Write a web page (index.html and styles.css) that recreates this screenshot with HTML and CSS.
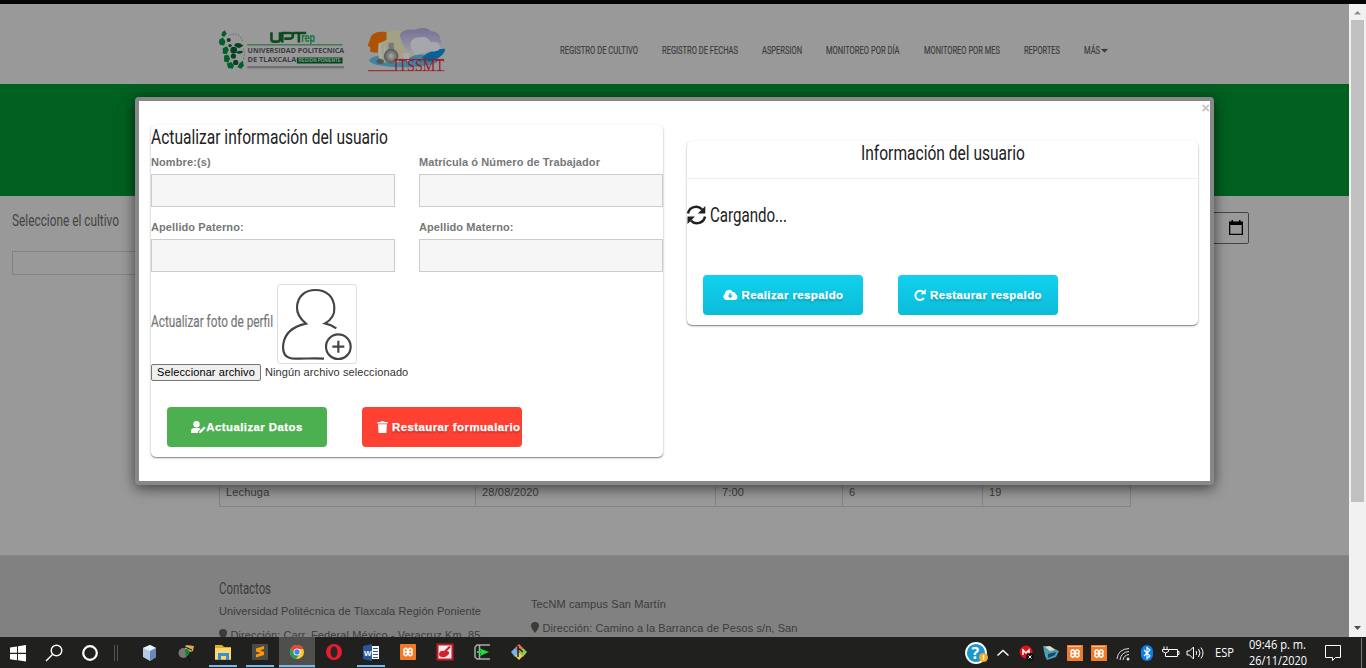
FILE: index.html
```
<!DOCTYPE html>
<html lang="es">
<head>
<meta charset="utf-8">
<title>Actualizar información del usuario</title>
<link rel="stylesheet" href="styles.css">
</head>
<body>
<div class="strip"></div>
<div class="browser">
  <div class="page">
    <header class="header">
      <svg class="logo-upt" viewBox="0 0 390 130" width="130" height="43">
        <g fill="#00602a">
          <path d="M14 10l8-6 6 10-8 10-8-4zM6 32l10-6 8 12-4 12-12-2-4-8z"/>
          <path d="M16 58l12-6 6 10-6 14-12-2zM20 80l12-2 6 12-6 12-12-4zM28 104l14-4 8 10-4 10-14-2zM66 104l10-8 4 14-8 10-12-4z"/>
        </g>
        <g fill="#073f22"><circle cx="34" cy="33" r="6"/><circle cx="49" cy="64" r="10"/><circle cx="48" cy="82" r="8"/><circle cx="55" cy="101" r="8"/><circle cx="38" cy="50" r="5"/><path d="M50 48q10-12 28 2q-15 16-28-2zM56 72q8-10 22-4q-8 12-22 4z"/></g>
        <g fill="none" stroke="#34644b" stroke-width="2" stroke-dasharray="5 4"><path d="M36 18q32-10 40 20M78 60q6 16 0 34"/></g>
        <path d="M163 10v20q0 8 8 8h10q8 0 8-8V10M196 41V12h24q8 0 8 8t-8 9h-18M228 12h40M246 12v29" fill="none" stroke="#0d4b20" stroke-width="8"/>
        <text x="253" y="39" class="logo-rep" textLength="42" lengthAdjust="spacingAndGlyphs">rep</text>
        <path d="M90 48h288" stroke="#156c32" stroke-width="3"/>
        <text x="91" y="73" class="logo-word" textLength="292" lengthAdjust="spacingAndGlyphs">UNIVERSIDAD POLITECNICA</text>
        <text x="91" y="101" class="logo-word" textLength="147" lengthAdjust="spacingAndGlyphs">DE TLAXCALA</text>
        <path fill="#07461d" d="M240 86h138v18H240z"/>
        <text x="245" y="101" class="logo-small" textLength="128" lengthAdjust="spacingAndGlyphs">REGION PONIENTE</text>
        <path d="M90 115h292" stroke="#6e6e76" stroke-width="6"/><path d="M90 120h292" stroke="#888" stroke-width="3"/>
      </svg>
      <svg class="logo-its" viewBox="0 0 240 142" width="80" height="47">
        <defs><radialGradient id="flask"><stop offset="0" stop-color="#aaa"/><stop offset="1" stop-color="#555"/></radialGradient>
        <linearGradient id="cloud" x2="0" y2="1"><stop stop-color="#747194"/><stop offset="1" stop-color="#9d9ca8"/></linearGradient></defs>
        <ellipse cx="110" cy="104" rx="104" ry="21" fill="#3e83a1"/>
        <path d="M165 95q30-27 70-26q0 24-50 40z" fill="#08629a"/>
        <path d="M60 22q30-20 68 8l22 55-55 25H38V46z" fill="#a3a286"/>
        <path d="M98 26q10-18 44-15q34-12 51 5q28 2 27 23q14 18-16 28l-84 14q-19-34-22-55z" fill="url(#cloud)"/>
        <path d="M130 54q5-23 30-20q21-5 32 15q26-3 27 13q2 18-28 14l-45 12q-15-15-16-34z" fill="#a6a6ad"/>
        <path d="M58 18q-47-6-50 25l-7 17 9 5-2 12q12 4 23 4l4-29 23-10z" fill="#af5102"/>
        <path d="M34 52h9v44H34zM50 62h5v25h-5zM109 82h18v24h-18z" fill="#aaa"/>
        <path d="M64 51h16v31H64z" fill="#777"/><circle cx="72" cy="91" r="22" fill="url(#flask)"/><ellipse cx="39" cy="107" rx="11" ry="7" fill="#555"/>
        <text x="80" y="135" class="logo-itssmt" textLength="152" lengthAdjust="spacingAndGlyphs">ITSSMT</text>
        <path d="M2 135h80M82 101h150" stroke="#991c28" stroke-width="3"/><path d="M82 135h152" stroke="#991c28" stroke-width="2"/>
      </svg>
      <nav class="nav">
        <svg width="78" height="14"><text y="11" textLength="78" lengthAdjust="spacingAndGlyphs">REGISTRO DE CULTIVO</text></svg>
        <svg width="76" height="14"><text y="11" textLength="76" lengthAdjust="spacingAndGlyphs">REGISTRO DE FECHAS</text></svg>
        <svg width="40" height="14"><text y="11" textLength="40" lengthAdjust="spacingAndGlyphs">ASPERSION</text></svg>
        <svg width="74" height="14"><text y="11" textLength="73.500" lengthAdjust="spacingAndGlyphs">MONITOREO POR DÍA</text></svg>
        <svg width="76" height="14"><text y="11" textLength="76" lengthAdjust="spacingAndGlyphs">MONITOREO POR MES</text></svg>
        <svg width="36" height="14"><text y="11" textLength="36" lengthAdjust="spacingAndGlyphs">REPORTES</text></svg>
        <svg width="24" height="14"><text y="11" textLength="16" lengthAdjust="spacingAndGlyphs">MÁS</text><path d="M17 6h7l-3.500 3.500z"/></svg>
      </nav>
    </header>
    <div class="hero"></div>
    <main class="content">
      <div class="filters">
        <div class="crop">
          <svg width="108" height="22"><text y="16" textLength="107" lengthAdjust="spacingAndGlyphs">Seleccione el cultivo</text></svg>
          <div class="crop-input"></div>
        </div>
        <div class="date-input">
          <svg width="14" height="16" viewBox="0 0 14 16"><path d="M2.500 0h1.500v1.500h6V0h1.500v1.500H14V15H0V1.500h2.500zM1.300 5v8.700h11.400V5z" fill="#000" fill-rule="evenodd"/></svg>
        </div>
      </div>
      <div class="row">
        <span>Lechuga</span><span>28/08/2020</span><span>7:00</span><span>6</span><span>19</span>
      </div>
    </main>
    <footer class="footer">
      <div class="contact">
        <svg width="54" height="18"><text y="15" class="foot-title" textLength="52" lengthAdjust="spacingAndGlyphs">Contactos</text></svg>
        <p><svg width="264" height="14"><text y="11" textLength="262" lengthAdjust="spacing">Universidad Politécnica de Tlaxcala Región Poniente</text></svg></p>
        <p class="address"><svg width="264" height="16"><path d="M4 1a4 4 0 0 1 4 4q0 2-4 7q-4-5-4-7a4 4 0 0 1 4-4z"/><text x="11.500" y="11" textLength="250" lengthAdjust="spacing">Dirección: Carr. Federal México - Veracruz Km. 85</text></svg></p>
      </div>
      <div class="contact second">
        <p><svg width="264" height="14"><text y="11" textLength="135" lengthAdjust="spacing">TecNM campus San Martín</text></svg></p>
        <p class="address"><svg width="270" height="16"><path d="M4 1a4 4 0 0 1 4 4q0 2-4 7q-4-5-4-7a4 4 0 0 1 4-4z"/><text x="11.500" y="11" textLength="255" lengthAdjust="spacing">Dirección: Camino a la Barranca de Pesos s/n, San</text></svg></p>
      </div>
    </footer>
  </div>
  <div class="scrollbar">
    <svg width="17" height="16"><path d="M5 10.500h7L8.500 7z" fill="#8a8a8a"/></svg>
    <div class="thumb"></div>
    <svg class="down" width="17" height="17"><path d="M5 6h7l-3.500 4z" fill="#505050"/></svg>
  </div>
</div>

<div class="modal">
  <span class="close">×</span>
  <section class="card form">
    <svg class="title" width="240" height="28"><text y="19" textLength="237" lengthAdjust="spacingAndGlyphs">Actualizar información del usuario</text></svg>
    <div class="fields">
      <label>Nombre:(s)<input></label>
      <label>Matrícula ó Número de Trabajador<input></label>
      <label>Apellido Paterno:<input></label>
      <label>Apellido Materno:<input></label>
    </div>
    <div class="photo">
      <svg width="122" height="24"><text y="18" textLength="122" lengthAdjust="spacingAndGlyphs">Actualizar foto de perfil</text></svg>
      <div class="avatar">
        <svg viewBox="0 0 240 240" width="80" height="80" fill="none" stroke="#444" stroke-width="6.500"><path d="M141 224C105 221 72 226 44 223C22 220 16 202 19 179Q27 132 87 119C68 103 59 89 60 69C62 36 85 18 115 18C150 18 172 40 172 73C173 94 162 108 144 118Q162 122 178 133"/><circle cx="184" cy="188" r="37"/><path d="M184 170v36M166 188h36"/></svg>
      </div>
    </div>
    <div class="file"><span class="file-btn">Seleccionar archivo</span><span class="file-name">Ningún archivo seleccionado</span></div>
    <div class="actions">
      <button class="btn green"><svg width="15" height="13" viewBox="0 0 15 13"><circle cx="5.500" cy="3.200" r="3.200"/><path d="M0 12v-2q0-3 3.500-3h4.500l1.500 1L7 10.500V12zM8 12l.5-2L13 5.500l1.700 1.600L10 11.800z"/></svg>Actualizar Datos</button>
      <button class="btn red"><svg width="11" height="13" viewBox="0 0 11 13"><path d="M.3 1h3l.7-.8h3l.7.8h3v1.500H.3zM1 3.300h9L9.400 12h-7.800z"/></svg><span>Restaurar formualario</span></button>
    </div>
  </section>
  <section class="card info">
    <div class="info-head"><svg class="title" width="164" height="26"><text y="19" textLength="164" lengthAdjust="spacingAndGlyphs">Información del usuario</text></svg></div>
    <div class="loading">
      <svg width="19" height="20" viewBox="0 0 19 20"><path d="M1 8.500a8.200 8.200 0 0 1 14-4.200M18 11.500a8.200 8.200 0 0 1-14 4.200" fill="none" stroke="#212121" stroke-width="2.500"/><path d="M18.300 1v7.500h-7.500zM.5 19v-7.500H8z" fill="#212121"/></svg>
      <svg class="title" width="80" height="28"><text y="21" textLength="77" lengthAdjust="spacingAndGlyphs">Cargando...</text></svg>
    </div>
    <div class="actions">
      <button class="btn cyan"><svg width="15" height="12" viewBox="0 0 15 12"><path fill-rule="evenodd" d="M3.500 11A3.400 3.400 0 0 1 2 4.700A4.100 4.100 0 0 1 9.700 3A2.600 2.600 0 0 1 12.700 5.300A3 3 0 0 1 12 11zM6.300 4.200v2.300H4.500L7.200 9.300 10 6.500H8.200V4.200z"/></svg><span>Realizar respaldo</span></button>
      <button class="btn cyan"><svg width="12" height="13" viewBox="0 0 12 13"><path d="M9.500 3.500A4.600 4.600 0 1 0 9.800 9" fill="none" stroke="#fff" stroke-width="2"/><path d="M11.800 0v5.200H6.500z"/></svg><span>Restaurar respaldo</span></button>
    </div>
  </section>
</div>

<div class="taskbar">
  <svg width="36" height="31"><path d="M10 10.500l7-1v6.300h-7zM18 9.300l8-1.200v7.700h-8zM10 17h7v6.200l-7-1zM18 17h8v7.500l-8-1.200z" fill="#fff"/></svg>
  <svg width="36" height="31" fill="none" stroke="#fff" stroke-width="1.400"><circle cx="20.500" cy="13.500" r="5.300"/><path d="M16.500 17.500L10 24"/></svg>
  <svg width="36" height="31"><circle cx="18" cy="16" r="6.800" fill="none" stroke="#fff" stroke-width="2.200"/></svg>
  <svg width="23" height="31"><path d="M6.500 8v16M9.500 8v16" stroke="#555"/></svg>
  <svg width="37" height="31"><path d="M12 11l7-3 6 3v9l-6 4-7-4z" fill="#b4cbe5"/><path d="M12 11l7 3 6-3-6-3z" fill="#e7f2ff"/><path d="M19 14l6-3v9l-6 4z" fill="#6989ba"/></svg>
  <svg width="37" height="31"><circle cx="15.500" cy="16" r="5" fill="#777"/><path d="M17 9l2-1 7 1-1 5-3 1-5-3z" fill="#d9a75d"/><path d="M17 12q6 0 4 5l-3 3z" fill="#0b8b28"/><path d="M17 10l7 3M19 19l4 5" stroke="#111"/></svg>
  <svg width="37" height="31"><path d="M10 8h7l2 2h7v13H10z" fill="#e8ab20"/><path d="M10 11h16v11H10z" fill="#ffd86a"/><path d="M13 16h11v7h-3v-4h-5v4h-3z" fill="#3490dd"/><path d="M4 28h28v2H4z" fill="#76b9ed"/></svg>
  <svg width="37" height="31"><rect x="10" y="7" width="16" height="16" rx="1" fill="#4b4b4b"/><path d="M14 11.500l8-2.500v3l-4 1.500 4 1.200v3.300l-8 2.500v-3l4.500-1.500-4.500-1.500z" fill="#ff9800"/><path d="M4 28h28v2H4z" fill="#76b9ed"/></svg>
  <svg width="37" height="31"><path d="M0 0h36v31H0z" fill="#4e4e4d"/><circle cx="18" cy="15" r="7" fill="#ffca28"/><path d="M12 11.500A7 7 0 0 1 24.500 12H18l-3 5z" fill="#ea4335"/><path d="M12 11.500A7 7 0 0 0 17 22l3.500-5H15z" fill="#1fa15a"/><circle cx="18" cy="15" r="3.500" fill="#fff"/><circle cx="18" cy="15" r="2.700" fill="#4285f4"/><path d="M0 28h36v2H0z" fill="#76b9ed"/></svg>
  <svg width="37" height="31"><ellipse cx="18" cy="15" rx="8" ry="8" fill="#e51d2e"/><ellipse cx="18" cy="15" rx="3.500" ry="5.800" fill="#262626"/></svg>
  <svg width="37" height="31"><path d="M17 9h9v13h-9z" fill="#fff"/><path d="M20 11.500h5M20 14.500h5M20 17.500h5M20 20.500h5" stroke="#2b579a"/><path d="M10 9l9-2v17l-9-2z" fill="#2b579a"/><text x="11" y="19" class="word-w">W</text><path d="M4 28h28v2H4z" fill="#76b9ed"/></svg>
  <svg width="37" height="31"><rect x="10" y="7" width="16" height="16" rx="1" fill="#f27b2a"/><path d="M18 15h-2.500a1.800 1.800 0 1 1 1.800-2.500zM18 15h2.500a1.800 1.800 0 1 0-1.800-2.500zM18 15h-2.500a1.800 1.800 0 1 0 1.800 2.500zM18 15h2.500a1.800 1.800 0 1 1-1.800 2.500z" fill="none" stroke="#fff" stroke-width="1.600"/></svg>
  <svg width="37" height="31"><path d="M10.500 7.500h15v15h-15z" fill="#eee" stroke="#c51a25" stroke-width="2"/><path d="M12 17q1-4 5-3l5-5 2 1-4 4q4 1 1 4t-6 2q-3 0-3-3z" fill="#d3222e"/></svg>
  <svg width="37" height="31"><path d="M26 8H13l-2 2M11 10v10l2 2h13M15.500 8v14" fill="none" stroke="#aaa" stroke-width="1.500"/><path d="M15 11l10 4-9 4 1-3h-4v-2h4z" fill="#20dc36"/></svg>
  <svg width="37" height="31"><path d="M18 7l4 4-4 4-4-4z" fill="#eb7358"/><path d="M14 11l4 4-4 5-4-5z" fill="#76b5ea"/><path d="M18 15l4 4-4 4-4-4z" fill="#f2ce59"/><path d="M22 11l4 4-4 5-4-5z" fill="#98c65b"/><path d="M17 9v11M17 11l5 4" stroke="#222" stroke-width="1.500" fill="none"/></svg>
  <div class="tray">
    <svg width="27" height="31"><circle cx="12" cy="16" r="10" fill="#1b96d1" stroke="#fff" stroke-width="1.800"/><text x="7.500" y="22" class="help">?</text><circle cx="19.500" cy="20.500" r="4.500" fill="#f2af25"/><path d="M19.500 18v5" stroke="#fff" stroke-width="1.400"/></svg>
    <svg width="24" height="31"><path d="M6.500 18.500l5.500-5 5.500 5" fill="none" stroke="#fff" stroke-width="1.400"/></svg>
    <svg width="24" height="31"><circle cx="11" cy="15" r="6.500" fill="#d9141e"/><path d="M8 18v-5l3 3 3-3v4" fill="none" stroke="#fff" stroke-width="1.500"/><circle cx="15" cy="20" r="4" fill="#111"/><path d="M13.500 18.500l3 3m0-3l-3 3" stroke="#fff"/></svg>
    <svg width="24" height="31"><path d="M4 9l6 0 10 5-3 6-9 3-2-4z" fill="#4c9eb4"/><path d="M6 10l5-1 5 4-5 1z" fill="#e8dcb8"/><path d="M9 17l8-2-1 3-7 3z" fill="#17476b"/></svg>
    <svg width="24" height="31"><rect x="4" y="8" width="16" height="16" fill="#f27b2a"/><path d="M5 9.500h13" stroke="#ffc298"/><path d="M12 16.500H9.500a1.800 1.800 0 1 1 1.800-2.500zM12 16.500h2.500a1.800 1.800 0 1 0-1.800-2.500zM12 16.500H9.500a1.800 1.800 0 1 0 1.800 2.500zM12 16.500h2.500a1.800 1.800 0 1 1-1.800 2.500z" fill="none" stroke="#fff" stroke-width="1.500"/></svg>
    <svg width="24" height="31"><rect x="4" y="8" width="16" height="16" fill="#f27b2a"/><path d="M5 9.500h13" stroke="#ffc298"/><path d="M12 16.500H9.500a1.800 1.800 0 1 1 1.800-2.500zM12 16.500h2.500a1.800 1.800 0 1 0-1.800-2.500zM12 16.500H9.500a1.800 1.800 0 1 0 1.800 2.500zM12 16.500h2.500a1.800 1.800 0 1 1-1.800 2.500z" fill="none" stroke="#fff" stroke-width="1.500"/></svg>
    <svg width="24" height="31" fill="none" stroke="#ddd"><path d="M6 22Q7 12 18 11.500M9 23q1-8 9-8.500M12 23q1-5 6-5.500"/><circle cx="17" cy="22" r="1.500" fill="#ddd" stroke="none"/></svg>
    <svg width="24" height="31"><rect x="6" y="8" width="12" height="16" rx="6" fill="#0a7fe8"/><path d="M9 13l6 6-3 2.500v-11l3 2.500-6 6" fill="none" stroke="#fff" stroke-width="1.100"/></svg>
    <svg width="24" height="31" fill="none" stroke="#fff"><path d="M10 12.500h8.500v7H8.500M18.500 14.500h1.500v3h-1.500M5 9.500v3M8 9.500v3M3.500 12.500h6v2q-3 3-6 0zM6.500 16v3.500h3"/></svg>
    <svg width="24" height="31" fill="none" stroke="#fff"><path d="M4 14h2.500l4-4v12l-4-4H4zM13 14q1.500 2 0 4M15.500 12q3 4 0 8M18 10.500q4 5.500 0 11"/></svg>
    <svg width="42" height="31"><text x="8" y="20" textLength="19" lengthAdjust="spacingAndGlyphs">ESP</text></svg>
    <svg width="60" height="31"><text y="12" textLength="57" lengthAdjust="spacingAndGlyphs">09:46 p. m.</text><text y="28" textLength="58" lengthAdjust="spacingAndGlyphs">26/11/2020</text></svg>
    <svg width="57" height="31" fill="none" stroke="#fff"><path d="M16.500 8.500h15v12h-5l-3 3v-3h-7z"/><path d="M52.500 1v30" stroke="#777"/></svg>
  </div>
</div>
</body>
</html>
```
FILE: styles.css
```
* { box-sizing: border-box; }
body {
  margin: 0;
  width: 1366px;
  height: 668px;
  overflow: hidden;
  position: relative;
  display: flex;
  flex-direction: column;
  background: #999;
  font-family: "Liberation Sans", Arial, sans-serif;
  font-size: 11px;
  letter-spacing: .1px;
}
svg { display: block; flex: none; }
p { margin: 0; }
.strip { height: 4px; background: #050505; flex: none; }
.browser { display: flex; height: 633px; flex: none; }
.page { width: 1349px; height: 633px; overflow: hidden; display: flex; flex-direction: column; }

.header { height: 80px; flex: none; background: #999; display: flex; align-items: flex-start; padding-left: 217px; }
.logo-upt { margin-top: 25px; overflow: visible; }
.logo-its { margin: 22px 0 0 20px; overflow: visible; }
.logo-word { font: bold 19px "Open Sans", sans-serif; fill: #3c3c42; letter-spacing: 0; }
.logo-rep { font: bold 34px Inter, sans-serif; fill: #0d7339; letter-spacing: 0; }
.logo-small { font: bold 16px "Liberation Sans", sans-serif; fill: #7fa188; }
.logo-itssmt { font: 50px "Liberation Serif", serif; fill: #991c28; letter-spacing: 0; }
.nav { display: flex; gap: 24px; margin: 39px 0 0 112.5px; }
.nav svg { overflow: visible; fill: #3c3c3c; stroke: #3c3c3c; stroke-width: .2px; font: 11px Roboto, sans-serif; letter-spacing: 0; }

.hero { height: 112px; flex: none; background: #006020; }
.content { height: 359px; flex: none; display: flex; flex-direction: column; justify-content: space-between; padding-bottom: 48px; }
.filters { display: flex; justify-content: space-between; padding: 14px 100px 0 12px; }
.crop svg { overflow: visible; fill: #444; font: 17px Roboto, sans-serif; letter-spacing: 0; }
.crop-input { width: 180px; height: 24px; margin-top: 19px; border: 1px solid #838383; }
.date-input { width: 150px; height: 32px; margin-top: 2px; border: 1px solid #444; border-radius: 2px; display: flex; justify-content: flex-end; padding: 7px 5px; }
.row { width: 912px; height: 30px; margin-left: 219px; display: grid; grid-template-columns: 256px 240px 127px 140px 148px; border: solid #838383; border-width: 0 0 1px 1px; color: #3c3c3c; letter-spacing: .18px; }
.row { width: 911.5px; }
.row span { border-right: 1px solid #838383; padding: 9px 6px; }

.footer { flex: 1; background: #818181; border-top: 1px solid #888; display: flex; padding: 23px 0 0 218.5px; color: #3c3c3c; }
.footer svg { overflow: visible; fill: #3c3c3c; font: 11px "Liberation Sans", sans-serif; }
.footer .foot-title { font: 17px Roboto, sans-serif; letter-spacing: 0; }
.contact { width: 312px; }
.contact p { margin-top: 7px; }
.contact .address { margin-top: 10px; }
.second { padding-top: 11px; }

.scrollbar { width: 17px; background: #f1f1f1; display: flex; flex-direction: column; }
.thumb { height: 482px; margin: 0 2px; background: #c1c1c1; }
.down { margin-top: auto; }

.modal {
  position: absolute; left: 135px; top: 97px;
  width: 1079px; height: 388px;
  border: 4px solid #888; border-radius: 4px;
  background: #fff;
  box-shadow: 0 3px 14px rgba(0, 0, 0, .6);
  display: flex; align-items: flex-start; gap: 24px;
  padding: 24px 12px;
}
.close { position: absolute; right: 0; top: -1px; font: bold 15px/16px "Liberation Sans", sans-serif; color: #c4c4c4; letter-spacing: 0; }
.card { border-radius: 5px; box-shadow: 0 1px 1px rgba(0, 0, 0, .35), 0 1px 3px rgba(0, 0, 0, .22); }
.form { width: 512px; height: 332px; }
.info { width: 511px; height: 184px; margin-top: 16px; }
.title { overflow: visible; fill: #212121; font: 20.5px Roboto, sans-serif; letter-spacing: 0; }
.fields { display: grid; grid-template-columns: 244px 244px; gap: 10px 24px; padding-top: 3px; }
.fields label { height: 55px; line-height: 12px; font-weight: bold; color: #777; }
.fields input { display: block; width: 244px; height: 33px; margin-top: 6px; border: 1px solid #ccc; background: #f6f6f6; border-radius: 0; }
.photo { display: flex; align-items: center; gap: 4px; margin-top: 8px; }
.photo > svg { overflow: visible; fill: #777; stroke: #777; stroke-width: .2px; font: 17px Roboto, sans-serif; letter-spacing: 0; margin-top: -6px; }
.avatar { width: 80px; height: 80px; border: 1px solid #ddd; border-radius: 3px; }
.avatar svg { margin: -1px; stroke-width: 6.5px; }
.file { display: flex; gap: 4px; line-height: 15px; color: #333; }
.file-btn { width: 110px; height: 17px; border: 1px solid #767676; border-radius: 2px; background: #efefef; color: #000; text-align: center; white-space: nowrap; }
.file-name { padding-top: 1px; }
.actions { display: flex; gap: 35px; padding-left: 16px; margin-top: 26px; }
.btn {
  width: 160px; height: 40px; border: 0; border-radius: 4px; padding: 0;
  display: flex; align-items: center; justify-content: center; gap: 4px;
  font: bold 11.4px "Liberation Sans", sans-serif;
  letter-spacing: .45px; color: #fff; white-space: nowrap;
  -webkit-text-stroke: .25px #fff;
}
.btn svg { fill: #fff; }
.green { background: #4caf50; gap: 0; }
.red { background: #ff4133; text-shadow: 0 2px 2px rgba(0, 0, 0, .25); justify-content: flex-start; padding-left: 15px; }
.cyan { background: linear-gradient(#11d1ef, #0bbcd9); text-shadow: 0 2px 2px rgba(0, 0, 0, .25); }
.info-head { height: 38px; border-bottom: 1px solid #eee; display: flex; justify-content: center; }
.loading { display: flex; align-items: center; gap: 4px; height: 28px; margin-top: 22px; }
.info .actions { margin-top: 46px; }

.taskbar { height: 31px; flex: none; display: flex; background: #20201f; position: relative; }
.tray { margin-left: auto; display: flex; }
.tray svg { font: 12.5px "Open Sans", sans-serif; letter-spacing: 0; }
.tray text { fill: #fff; stroke: none; }
.tray .help { font: bold 16px "Open Sans", sans-serif; }
.word-w { font: bold 8px "Liberation Sans", sans-serif; fill: #fff; letter-spacing: 0; }
```
